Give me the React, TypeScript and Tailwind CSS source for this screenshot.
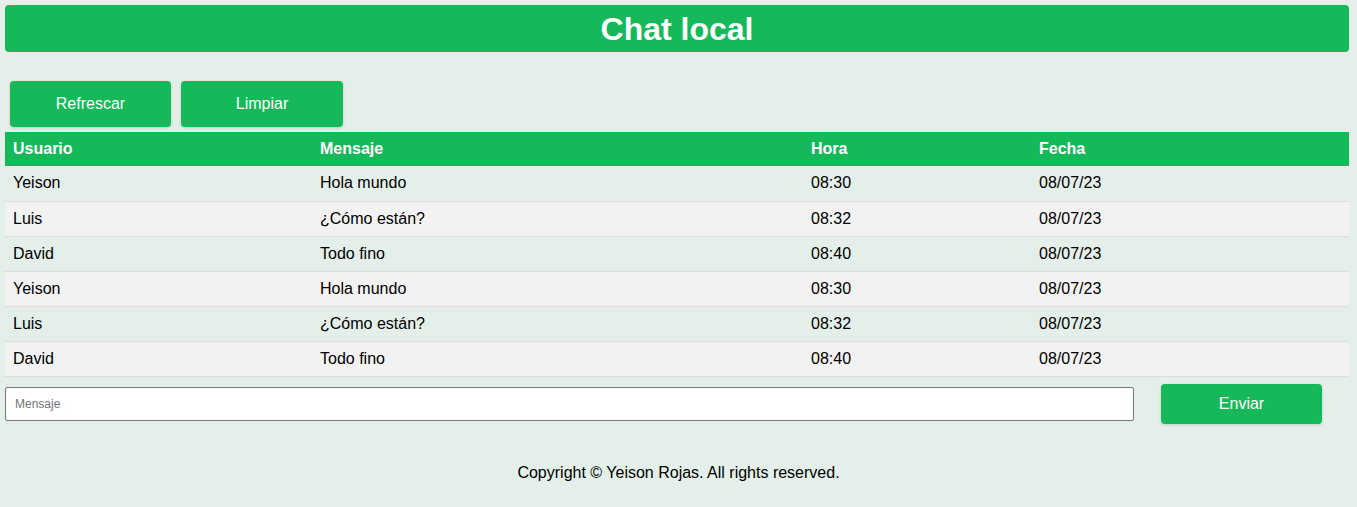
const rows = [
  { user: "Yeison", msg: "Hola mundo", hour: "08:30", date: "08/07/23" },
  { user: "Luis", msg: "¿Cómo están?", hour: "08:32", date: "08/07/23" },
  { user: "David", msg: "Todo fino", hour: "08:40", date: "08/07/23" },
  { user: "Yeison", msg: "Hola mundo", hour: "08:30", date: "08/07/23" },
  { user: "Luis", msg: "¿Cómo están?", hour: "08:32", date: "08/07/23" },
  { user: "David", msg: "Todo fino", hour: "08:40", date: "08/07/23" },
];

export default function App() {
  return (
    <div className="min-h-[507px] w-full bg-[#e4efe9] px-[5px] pt-[5px] font-['Liberation_Sans',Arial,sans-serif] text-black">
      <header className="flex h-[47px] w-[1344px] items-center justify-center rounded-[4px] bg-[#15b95a]">
        <h1 className="text-[32px] font-bold leading-none text-white">Chat local</h1>
      </header>

      <div className="mt-[29px] flex gap-[10px] pl-[5px]">
        <button className="h-[46px] w-[161px] rounded-[4px] bg-[#15b95a] text-[16px] text-white shadow-[0_1px_3px_rgba(0,0,0,0.15)]">
          Refrescar
        </button>
        <button className="h-[46px] w-[162px] rounded-[4px] bg-[#15b95a] text-[16px] text-white shadow-[0_1px_3px_rgba(0,0,0,0.15)]">
          Limpiar
        </button>
      </div>

      <table className="mt-[5px] w-[1344px] border-collapse text-left text-[16px]">
        <thead>
          <tr className="h-[34px] bg-[#15b95a] text-white">
            <th className="w-[307px] px-[8px] font-bold">Usuario</th>
            <th className="w-[491px] px-[8px] font-bold">Mensaje</th>
            <th className="w-[228px] px-[8px] font-bold">Hora</th>
            <th className="px-[8px] font-bold">Fecha</th>
          </tr>
        </thead>
        <tbody>
          {rows.map((r, i) => (
            <tr
              key={i}
              className={
                "h-[35px] border-b border-[#dddddd] " +
                (i % 2 === 1 ? "bg-[#f2f2f2]" : "bg-[#e4efe9]")
              }
            >
              <td className="px-[8px]">{r.user}</td>
              <td className="px-[8px]">{r.msg}</td>
              <td className="px-[8px]">{r.hour}</td>
              <td className="px-[8px]">{r.date}</td>
            </tr>
          ))}
        </tbody>
      </table>

      <div className="mt-[7px] flex items-center">
        <input
          type="text"
          placeholder="Mensaje"
          className="h-[34px] w-[1129px] rounded-[2px] border border-[#767676] bg-white px-[9px] text-[12px] placeholder:text-[#757575] focus:outline-none"
        />
        <button className="ml-[27px] h-[40px] w-[161px] rounded-[4px] bg-[#15b95a] text-[16px] text-white shadow-[0_1px_3px_rgba(0,0,0,0.15)]">
          Enviar
        </button>
      </div>

      <footer className="mt-[37px] pb-[26px] text-center text-[16px]">
        Copyright © Yeison Rojas. All rights reserved.
      </footer>
    </div>
  );
}
